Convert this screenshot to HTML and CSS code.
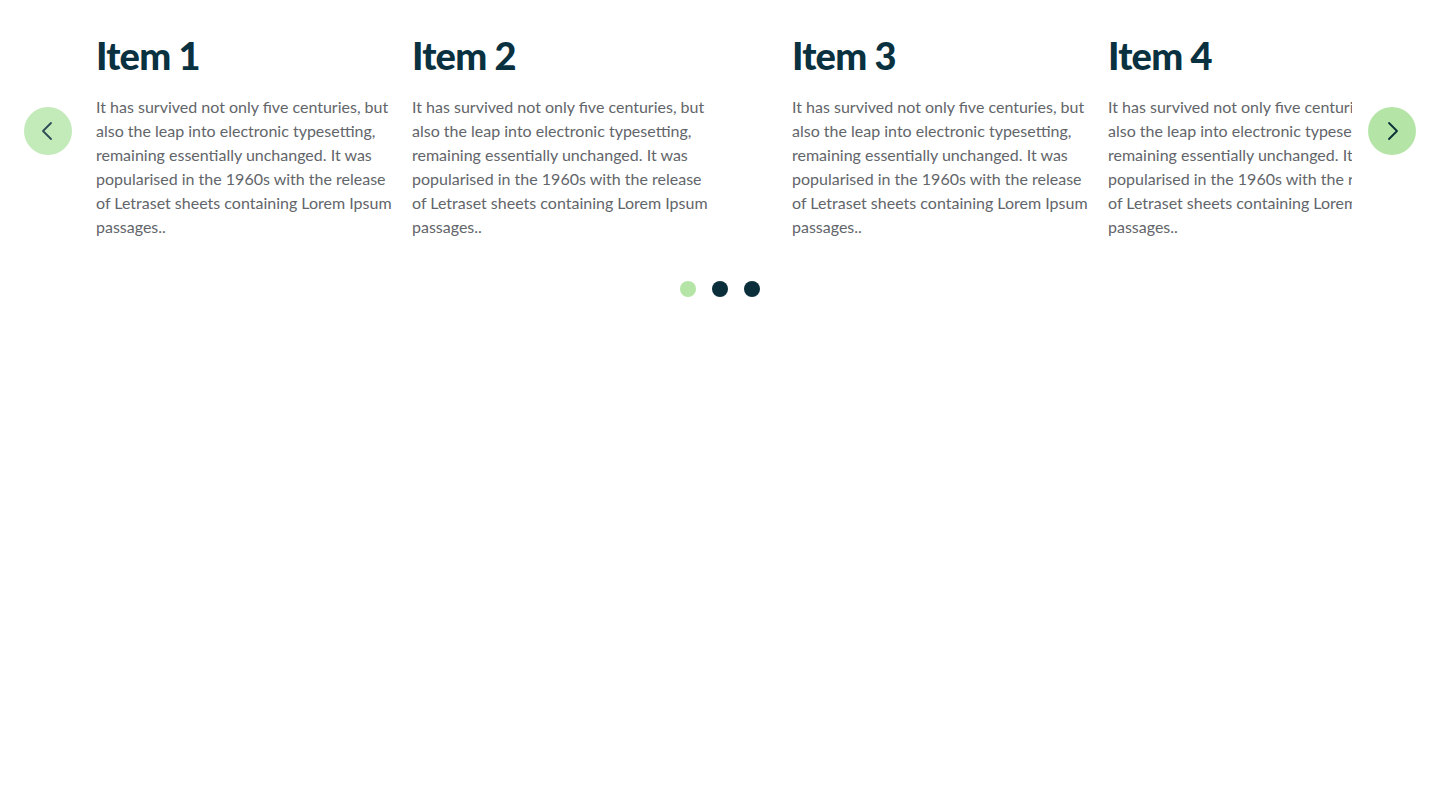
FILE: index.html
```html
<!DOCTYPE html>
<html lang="en">
<head>
<meta charset="utf-8">
<title>Carousel</title>
<link rel="stylesheet" href="styles.css">
</head>
<body>
<section class="carousel">
  <div class="carousel-row">
    <button class="arrow arrow-prev" aria-label="Previous">
      <svg viewBox="0 0 24 24" width="24" height="24"><path d="M15 4 L7 12 L15 20" fill="none" stroke="#2e4a55" stroke-width="1.8" stroke-linecap="round" stroke-linejoin="round"/></svg>
    </button>
    <div class="viewport">
      <div class="track">
        <article class="slide">
          <h2 class="slide-title">Item 1</h2>
          <p class="slide-text">It has survived not only five centuries, but also the leap into electronic typesetting, remaining essentially unchanged. It was popularised in the 1960s with the release of Letraset sheets containing Lorem Ipsum passages..</p>
        </article>
        <article class="slide slide-wide">
          <h2 class="slide-title">Item 2</h2>
          <p class="slide-text">It has survived not only five centuries, but also the leap into electronic typesetting, remaining essentially unchanged. It was popularised in the 1960s with the release of Letraset sheets containing Lorem Ipsum passages..</p>
        </article>
        <article class="slide">
          <h2 class="slide-title">Item 3</h2>
          <p class="slide-text">It has survived not only five centuries, but also the leap into electronic typesetting, remaining essentially unchanged. It was popularised in the 1960s with the release of Letraset sheets containing Lorem Ipsum passages..</p>
        </article>
        <article class="slide">
          <h2 class="slide-title">Item 4</h2>
          <p class="slide-text">It has survived not only five centuries, but also the leap into electronic typesetting, remaining essentially unchanged. It was popularised in the 1960s with the release of Letraset sheets containing Lorem Ipsum passages..</p>
        </article>
      </div>
    </div>
    <button class="arrow arrow-next" aria-label="Next">
      <svg viewBox="0 0 24 24" width="24" height="24"><path d="M9 4 L17 12 L9 20" fill="none" stroke="#0a2e3a" stroke-width="1.8" stroke-linecap="round" stroke-linejoin="round"/></svg>
    </button>
  </div>
  <div class="dots">
    <span class="dot dot-active"></span>
    <span class="dot"></span>
    <span class="dot"></span>
  </div>
</section>
</body>
</html>
```
FILE: styles.css
```css
html, body {
  margin: 0;
  padding: 0;
  background: #ffffff;
}
body {
  font-family: "Lato", "Open Sans", sans-serif;
}
.carousel {
  padding-top: 30px;
}
.carousel-row {
  display: flex;
  align-items: flex-start;
  padding: 0 24px;
}
.arrow {
  flex: 0 0 48px;
  width: 48px;
  height: 48px;
  margin-top: 77px;
  border: none;
  border-radius: 50%;
  padding: 0;
  display: flex;
  align-items: center;
  justify-content: center;
  cursor: pointer;
}
.arrow-prev {
  background: #c3eab9;
}
.arrow-next {
  background: #b5e5a6;
}
.viewport {
  flex: 1;
  overflow: hidden;
  margin: 0 16px 0 24px;
}
.track {
  display: flex;
}
.slide {
  flex: 0 0 300px;
  margin-right: 16px;
}
.slide-wide {
  margin-right: 80px;
}
.slide-title {
  margin: 0;
  font-size: 38px;
  line-height: 50px;
  font-weight: 900;
  color: #0a3140;
  letter-spacing: -0.8px;
}
.slide-text {
  margin: 15px 0 0;
  font-size: 16px;
  line-height: 24px;
  color: #62656a;
}
.dots {
  display: flex;
  justify-content: center;
  gap: 16px;
  margin-top: 42px;
}
.dot {
  width: 16px;
  height: 16px;
  border-radius: 50%;
  background: #0a2e3a;
}
.dot-active {
  background: #b5e5a6;
}
```
